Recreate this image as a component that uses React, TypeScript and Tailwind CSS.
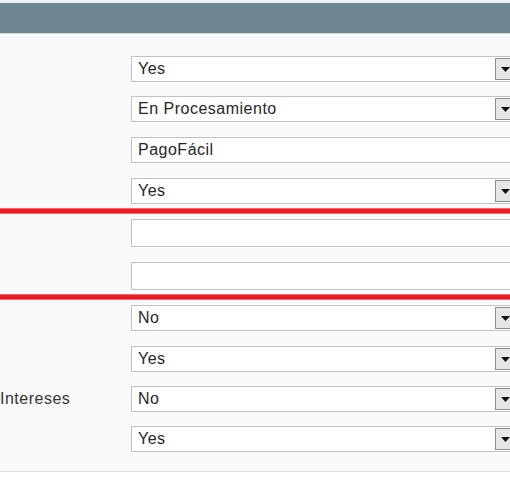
import React from "react";

const font = { fontFamily: '"Liberation Sans", Arial, sans-serif' };

function Arrow() {
  return (
    <div className="my-[1px] mr-[1px] flex w-[18px] items-center justify-center border border-[#8c8c8c] bg-[#e6e6e6]">
      <svg width="9" height="5" viewBox="0 0 9 5" className="ml-[2px]">
        <path d="M0 0 H9 L4.5 5 Z" fill="#111" />
      </svg>
    </div>
  );
}

function Select({ value, mt, label }: { value: string; mt: string; label?: string }) {
  return (
    <div className={`flex h-[26px] ${mt}`}>
      <div className="flex w-[131px] shrink-0 items-center text-[16px] tracking-[0.5px] text-[#333]">{label}</div>
      <div className="flex w-[384px] shrink-0 border border-[#c2c2c2] bg-white">
        <div className="flex flex-1 items-center pl-[6px] text-[16px] tracking-[0.5px] text-[#262626]">{value}</div>
        <Arrow />
      </div>
    </div>
  );
}

function Input({ value, mt, h }: { value?: string; mt: string; h: string }) {
  return (
    <div className={`flex ${h} ${mt}`}>
      <div className="w-[131px] shrink-0" />
      <div className="flex w-[384px] shrink-0 items-center border border-[#c2c2c2] bg-white pl-[6px] text-[16px] tracking-[0.5px] text-[#262626]">
        {value}
      </div>
    </div>
  );
}

function RedLine({ mt }: { mt: string }) {
  return (
    <div className={`${mt} flex h-[6px] flex-col`}>
      <div className="h-[1px] bg-[#f36a70]" />
      <div className="h-[4px] bg-[#ed1c24]" />
      <div className="h-[1px] bg-[#f36a70]" />
    </div>
  );
}

export default function App() {
  return (
    <div className="h-[482px] w-[510px] overflow-hidden bg-white" style={font}>
      <div className="h-[3px] bg-[#eef1f2]" />
      <div className="h-[30px] bg-[#6f8790]" />
      <div className="h-[1px] bg-[#d3d8da]" />
      <div className="flex h-[438px] flex-col border-b border-[#dcdcdc] bg-[#fafafa]">
        <Select value="Yes" mt="mt-[22px]" />
        <Select value="En Procesamiento" mt="mt-[14px]" />
        <Input value="PagoFácil" mt="mt-[15px]" h="h-[26px]" />
        <Select value="Yes" mt="mt-[15px]" />
        <RedLine mt="mt-[4px]" />
        <Input mt="mt-[5px]" h="h-[28px]" />
        <Input mt="mt-[15px]" h="h-[28px]" />
        <RedLine mt="mt-[4px]" />
        <Select value="No" mt="mt-[5px]" />
        <Select value="Yes" mt="mt-[15px]" />
        <Select value="No" mt="mt-[14px]" label="Intereses" />
        <Select value="Yes" mt="mt-[14px]" />
      </div>
    </div>
  );
}
